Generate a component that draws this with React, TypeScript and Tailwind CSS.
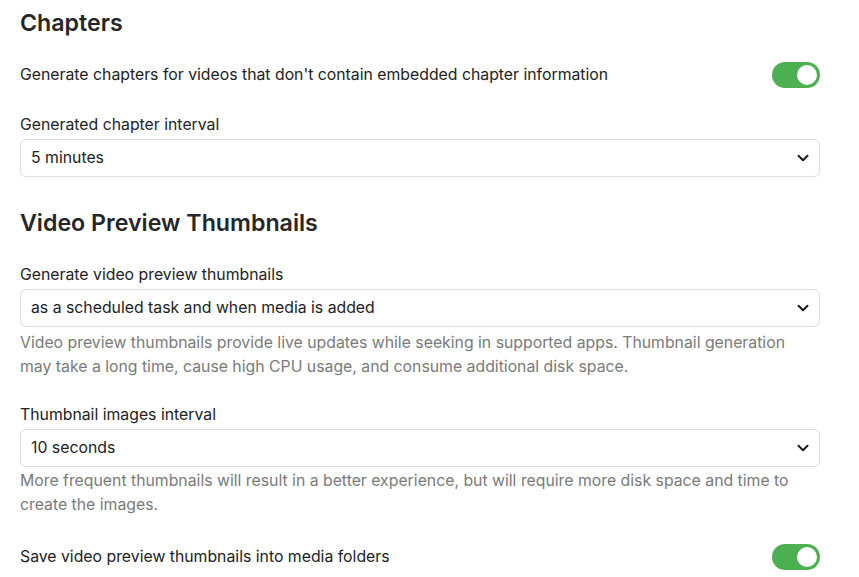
import React, { useState } from 'react';

const Toggle = ({ on, onChange }: { on: boolean; onChange: (v: boolean) => void }) => (
  <button
    type="button"
    onClick={() => onChange(!on)}
    className={`relative h-[26px] w-[48px] shrink-0 rounded-full ${on ? 'bg-[#4caf50]' : 'bg-[#ccc]'}`}
  >
    <span
      className={`absolute top-[3px] h-[20px] w-[20px] rounded-full bg-white ${on ? 'right-[3px]' : 'left-[3px]'}`}
    />
  </button>
);

const Chevron = () => (
  <svg width="14" height="14" viewBox="0 0 14 14" className="shrink-0">
    <path d="M2.5 4.8 L7 9.2 L11.5 4.8" fill="none" stroke="#1a1a1a" strokeWidth="2" strokeLinecap="round" strokeLinejoin="round" />
  </svg>
);

const Select = ({ value }: { value: string }) => (
  <div className="flex h-[38px] w-full items-center justify-between rounded-[6px] border border-[#dcdcdc] bg-white pl-[10px] pr-[9px] text-[15.8px] text-[#222]">
    <span>{value}</span>
    <Chevron />
  </div>
);

const App = () => {
  const [chapters, setChapters] = useState(true);
  const [saveThumbs, setSaveThumbs] = useState(true);

  return (
    <div className="min-h-[577px] w-[859px] bg-white pl-[20px] pr-[39px] pt-[9px] font-['Inter',_'Noto_Sans',sans-serif] text-[#222]">
      <h2 className="text-[23.2px] font-semibold leading-[28px] text-[#262626]">Chapters</h2>

      <div className="mt-[25px] flex items-center justify-between">
        <span className="text-[15.8px]">Generate chapters for videos that don't contain embedded chapter information</span>
        <Toggle on={chapters} onChange={setChapters} />
      </div>

      <div className="mt-[27px]">
        <div className="mb-[4px] text-[15.8px] leading-[20px]">Generated chapter interval</div>
        <Select value="5 minutes" />
      </div>

      <h2 className="mt-[32px] text-[23.2px] font-semibold leading-[28px] text-[#262626]">Video Preview Thumbnails</h2>

      <div className="mt-[28px]">
        <div className="mb-[4px] text-[15.8px] leading-[20px]">Generate video preview thumbnails</div>
        <Select value="as a scheduled task and when media is added" />
        <p className="mt-[4px] text-[15.8px] leading-[24px] text-[#7a7a7a]">
          Video preview thumbnails provide live updates while seeking in supported apps. Thumbnail generation may take a long time, cause high CPU usage, and consume additional disk space.
        </p>
      </div>

      <div className="mt-[26px]">
        <div className="mb-[4px] text-[15.8px] leading-[20px]">Thumbnail images interval</div>
        <Select value="10 seconds" />
        <p className="mt-[2px] text-[15.8px] leading-[24px] text-[#7a7a7a]">
          More frequent thumbnails will result in a better experience, but will require more disk space and time to create the images.
        </p>
      </div>

      <div className="mt-[27px] flex items-center justify-between">
        <span className="text-[15.8px]">Save video preview thumbnails into media folders</span>
        <Toggle on={saveThumbs} onChange={setSaveThumbs} />
      </div>
    </div>
  );
};

export default App;
